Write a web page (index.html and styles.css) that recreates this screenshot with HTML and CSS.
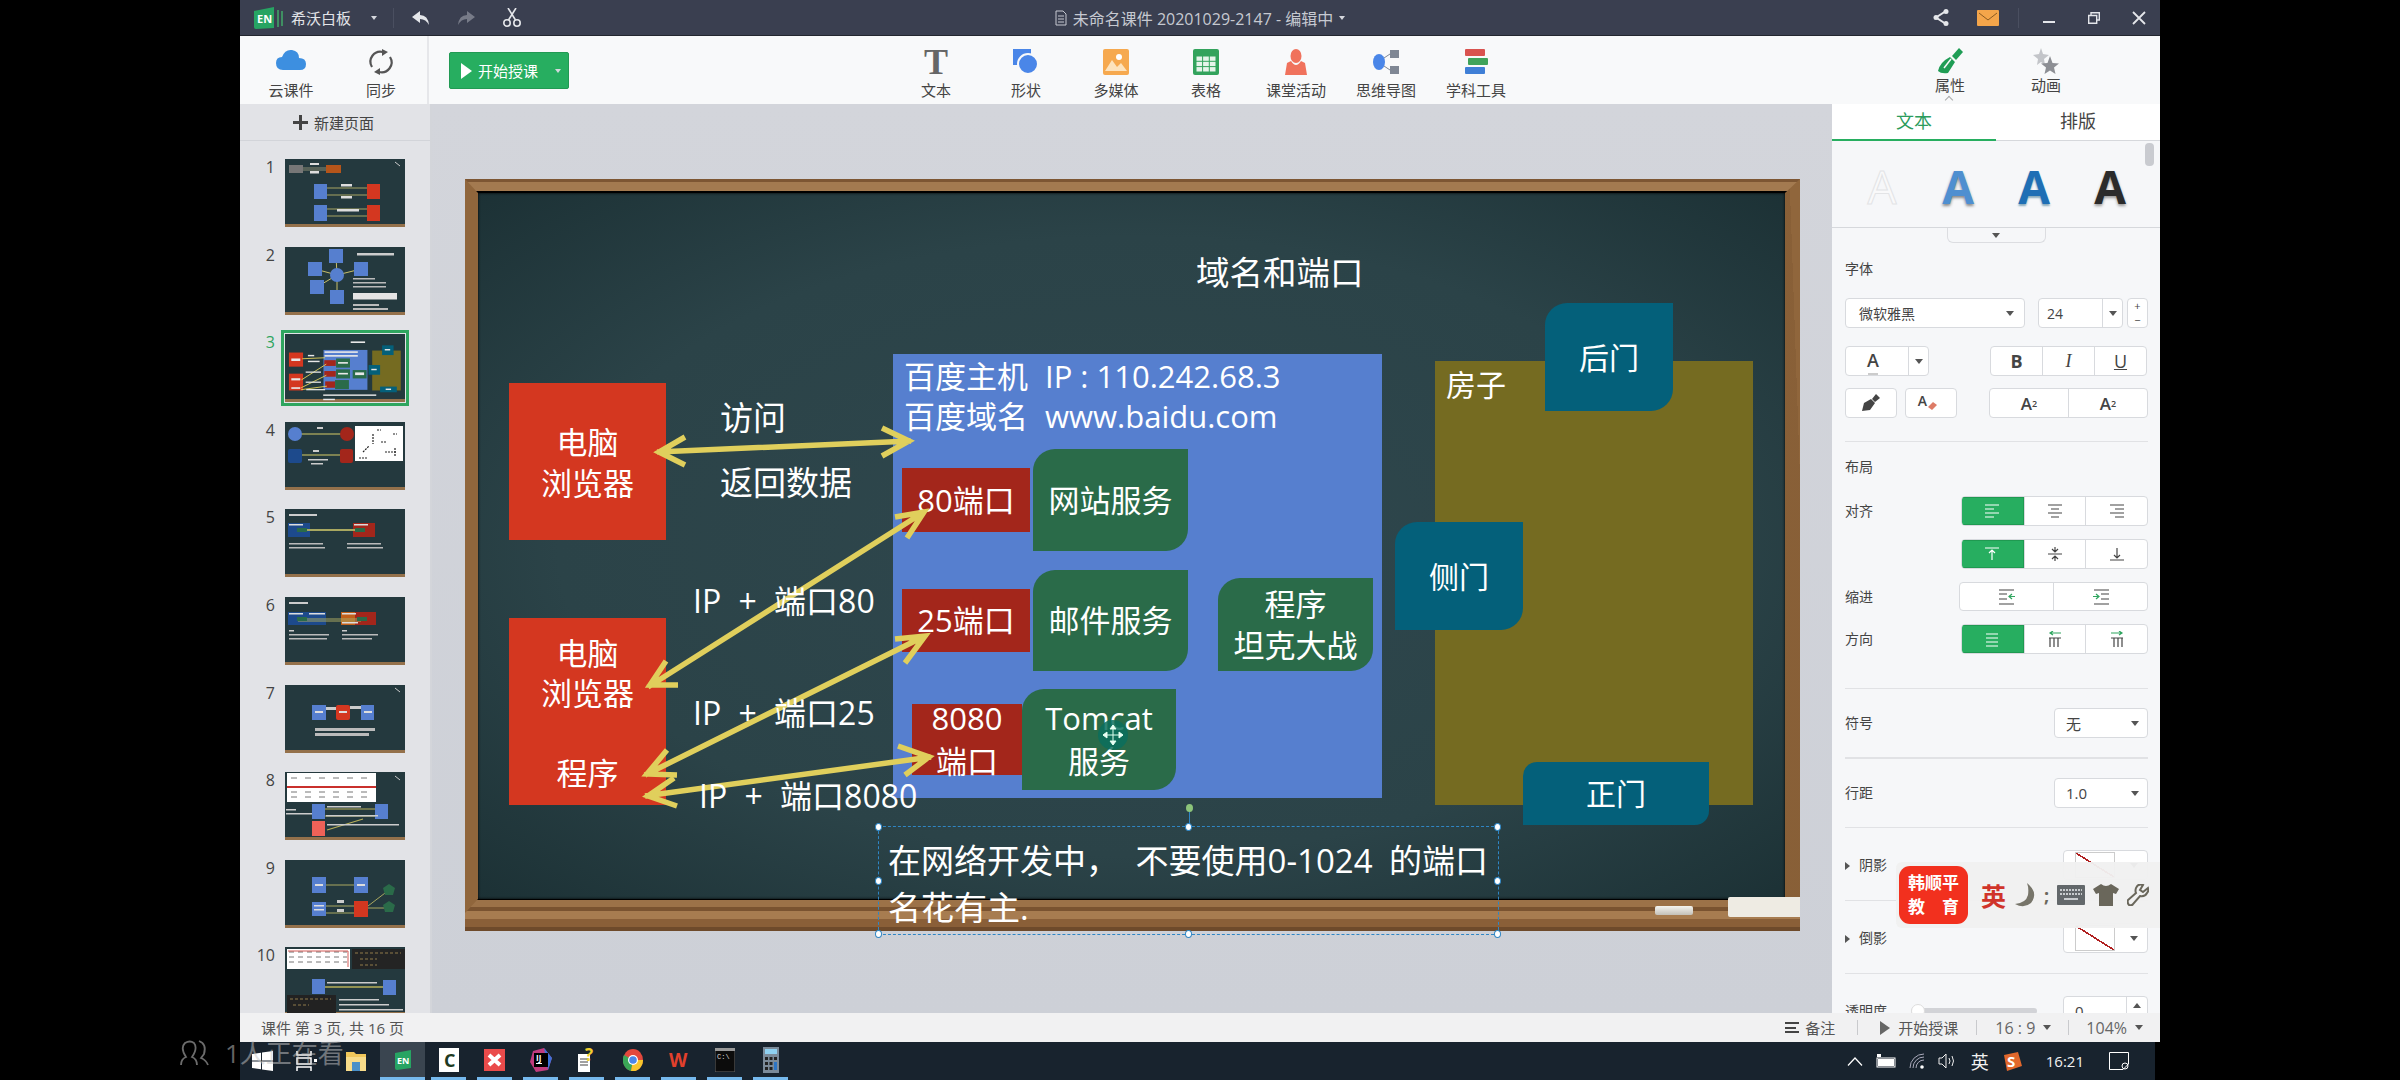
FILE: index.html
```html
<!DOCTYPE html>
<html lang="zh-CN">
  <head>
    <meta charset="UTF-8" />
    <title>希沃白板</title>
    <link rel="stylesheet" href="styles.css">
  </head>
  <body>
    <div class="app">
      <!-- title bar -->
      <header class="titlebar">
        <div class="title-left">
          <svg class="logo" width="31" height="22" viewBox="0 0 31 22"><rect x="24" y="3" width="2" height="17" fill="#3f8f62"/><rect x="28" y="4" width="2" height="15" fill="#3f8f62"/><path d="M1 4 L21 0 V21 L3 22 Q1 22 1 20Z" fill="#27a463"/><text x="4" y="16" class="logo-text">EN</text></svg>
          <span class="app-name">希沃白板</span>
          <span class="caret caret-light app-caret"></span>
          <span class="title-sep"></span>
          <svg class="undo" width="18" height="16" viewBox="0 0 18 16"><path d="M8 1 L0 7 L8 13 V9 Q14 9 17 15 Q16 5 8 5Z" fill="#e4e6ea"/></svg>
          <svg class="redo" width="18" height="16" viewBox="0 0 18 16"><path d="M10 1 L18 7 L10 13 V9 Q4 9 1 15 Q2 5 10 5Z" fill="#777b88"/></svg>
          <svg class="scissors" width="20" height="19" viewBox="0 0 20 19"><g fill="none" stroke="#e4e6ea" stroke-width="1.6"><circle cx="5" cy="15" r="3.2"/><circle cx="15" cy="15" r="3.2"/><path d="M6.5 12 L14 0M13.5 12 L6 0"/></g></svg>
        </div>
        <div class="doc-title">
          <svg width="12" height="16" viewBox="0 0 12 16"><path d="M1 1 H8 L11 4 V15 H1Z M3 6 H9 M3 9 H9 M3 12 H9" fill="none" stroke="#c6c9d1"/></svg>
          <span>未命名课件 20201029-2147 - 编辑中</span>
          <span class="caret caret-light"></span>
        </div>
        <div class="title-right">
          <svg width="16" height="17" viewBox="0 0 16 17"><path d="M13 2 L3 8.500 L13 15" fill="none" stroke="#e4e6ea" stroke-width="2"/><circle cx="13" cy="2.500" r="2.500" fill="#e4e6ea"/><circle cx="3" cy="8.500" r="2.500" fill="#e4e6ea"/><circle cx="13" cy="14.500" r="2.500" fill="#e4e6ea"/></svg>
          <svg class="mail" width="22" height="16" viewBox="0 0 22 16"><rect width="22" height="16" rx="1" fill="#f4a54a"/><path d="M2 3 L11 10 L20 3" fill="none" stroke="#8a5a20"/></svg>
          <span class="title-sep sep-right"></span>
          <span class="win-min"></span>
          <svg class="win-restore" width="12" height="12" viewBox="0 0 12 12"><path d="M3 3 V0.700 H11.300 V8 H9 M0.700 3.500 H8.700 V11.300 H0.700Z" fill="none" stroke="#e4e6ea" stroke-width="1.400"/></svg>
          <svg class="win-close" width="14" height="14" viewBox="0 0 14 14"><path d="M1 1 L13 13 M13 1 L1 13" stroke="#e4e6ea" stroke-width="1.800"/></svg>
        </div>
      </header>

      <!-- toolbar -->
      <nav class="toolbar">
        <div class="tool">
          <svg width="30" height="26" viewBox="0 0 30 26"><path d="M7 21 Q0 21 0 14 Q0 8 6 8 Q9 0 16 1 Q23 2 23 9 Q30 9 30 15 Q30 21 24 21Z" fill="#3d8fe0"/></svg>
          <span>云课件</span>
        </div>
        <div class="tool">
          <svg width="30" height="26" viewBox="0 0 30 26"><g fill="none" stroke="#555" stroke-width="2.200"><path d="M6 18 A10 10 0 0 1 17 3"/><path d="M24 8 A10 10 0 0 1 13 23"/></g><path d="M16 0 L22 3 L16 7Z M14 19 L8 23 L14 26Z" fill="#555"/></svg>
          <span>同步</span>
        </div>
        <span class="tool-sep"></span>
        <button class="start-btn"><span class="play"></span>开始授课<span class="caret caret-light"></span></button>
        <div class="tools-center">
          <div class="tool"><span class="tool-t">T</span><span>文本</span></div>
          <div class="tool">
            <svg width="26" height="26" viewBox="0 0 26 26"><rect x="0" y="0" width="18" height="16" fill="#4a86e8"/><circle cx="15" cy="15" r="10" fill="#4a86e8" stroke="#f8f9fa" stroke-width="2"/></svg>
            <span>形状</span>
          </div>
          <div class="tool">
            <svg width="26" height="26" viewBox="0 0 26 26"><rect width="26" height="26" rx="2" fill="#f6a94f"/><circle cx="16" cy="8" r="3" fill="#fff"/><path d="M2 22 L9 11 L14 18 L18 14 L24 22Z" fill="#fde3bd"/></svg>
            <span>多媒体</span>
          </div>
          <div class="tool">
            <svg width="26" height="26" viewBox="0 0 26 26"><rect width="26" height="26" rx="2" fill="#33a35c"/><path d="M3 7 H23 V23 H3Z M3 12.300 H23 M3 17.600 H23 M9.600 7 V23 M16.300 7 V23" fill="#e6f4ea" stroke="#33a35c"/></svg>
            <span>表格</span>
          </div>
          <div class="tool">
            <svg width="26" height="26" viewBox="0 0 26 26"><ellipse cx="13" cy="7" rx="5.500" ry="7" fill="#f0725c"/><path d="M2 26 L4 14 L8 12 Q13 20 18 12 L22 14 L24 26Z" fill="#f0725c"/></svg>
            <span>课堂活动</span>
          </div>
          <div class="tool">
            <svg width="30" height="26" viewBox="0 0 30 26"><ellipse cx="8" cy="13" rx="6" ry="8" fill="#4a86e8"/><rect x="19" y="1" width="9" height="8" fill="#7f8794"/><rect x="19" y="17" width="9" height="8" fill="#7f8794"/><path d="M13 9 L19 5 M13 17 L19 21" stroke="#7f8794"/></svg>
            <span>思维导图</span>
          </div>
          <div class="tool">
            <svg width="28" height="26" viewBox="0 0 28 26"><rect x="3" y="0" width="20" height="7" rx="1" fill="#d9534f"/><rect x="6" y="9" width="20" height="7" rx="1" fill="#3fa35a"/><rect x="3" y="18" width="20" height="7" rx="1" fill="#3f7fd6"/></svg>
            <span>学科工具</span>
          </div>
        </div>
        <div class="tools-right">
          <div class="tool tool-small">
            <svg width="26" height="26" viewBox="0 0 26 26"><path d="M22 0 L26 4 L19 12 L15 8Z M13 9 L18 14 L11 25 Q4 26 1 23 Q3 14 13 9Z" fill="#1f9d55"/><path d="M7 20 L14 11" stroke="#f8f9fa" stroke-width="1.500"/></svg>
            <span>属性</span>
            <span class="tool-chevron"></span>
          </div>
          <div class="tool tool-small">
            <svg width="28" height="26" viewBox="0 0 28 26"><path d="M9 0 L11 6 L17 7 L12 11 L13 17 L9 14 L5 17 L6 11 L1 7 L7 6Z" fill="#c3c5c9"/><path d="M18 8 L20.500 15 L27 15.500 L22 19.500 L23.500 26 L18 22.500 L12.500 26 L14 19.500 L9 15.500 L15.500 15Z" fill="#8d8f94"/></svg>
            <span>动画</span>
          </div>
        </div>
      </nav>

      <div class="workspace">
        <!-- page list -->
        <aside class="pages">
          <div class="new-page"><span class="plus"></span>新建页面</div>
          <div class="page-list">
            <div class="page-row"><span class="page-num">1</span><div class="thumb">
              <svg viewBox="0 0 120 68"><rect x="4" y="6" width="14" height="8" fill="#777"/><rect x="41" y="6" width="15" height="8" fill="#b5551a"/><path d="M18 9 H41 M18 11 H41" stroke="#b8b08a" stroke-width=".7"/><rect x="25" y="4" width="9" height="2" fill="#ddd"/><rect x="25" y="12" width="9" height="2.500" fill="#ddd"/><rect x="29" y="25" width="13" height="15" fill="#567fcf"/><rect x="82" y="25" width="13" height="15" fill="#d43720"/><rect x="29" y="46" width="13" height="16" fill="#567fcf"/><rect x="82" y="46" width="13" height="16" fill="#d43720"/><path d="M42 29 H82 M42 36 H82 M42 50 H82 M42 57 H82" stroke="#c9bf6c" stroke-width=".8"/><rect x="56" y="25" width="11" height="2.500" fill="#ddd"/><rect x="56" y="37" width="11" height="2.500" fill="#ddd"/><rect x="52" y="50" width="22" height="2.500" fill="#ddd"/><path d="M110 3 L115 7" stroke="#ccc"/></svg></div></div>
            <div class="page-row"><span class="page-num">2</span><div class="thumb">
              <svg viewBox="0 0 120 68"><path d="M52 28 L51 9 M52 28 L30 22 M52 28 L76 22 M52 28 L32 40 M52 28 L52 50" stroke="#c9bf6c"/><rect x="44" y="2" width="14" height="14" fill="#567fcf"/><rect x="23" y="15" width="14" height="14" fill="#567fcf"/><circle cx="52" cy="28" r="7" fill="#567fcf"/><rect x="69" y="15" width="14" height="14" fill="#567fcf"/><rect x="25" y="33" width="14" height="14" fill="#567fcf"/><rect x="45" y="43" width="14" height="14" fill="#567fcf"/><rect x="72" y="6" width="37" height="2.500" fill="#ccc"/><rect x="68" y="31" width="22" height="1.500" fill="#bbb"/><rect x="68" y="35" width="33" height="1.500" fill="#bbb"/><rect x="68" y="39" width="33" height="1.500" fill="#bbb"/><rect x="68" y="46" width="44" height="6.500" fill="#e4e4e4"/><rect x="68" y="57" width="26" height="2" fill="#bbb"/><rect x="68" y="61" width="35" height="2" fill="#bbb"/></svg></div></div>
            <div class="page-row page-active"><span class="page-num">3</span><div class="thumb">
              <svg viewBox="0 0 1335 752"><rect x="428" y="175" width="489" height="444" fill="#567fcf"/><rect x="44" y="204" width="157" height="157" fill="#d43720"/><rect x="44" y="439" width="157" height="187" fill="#d43720"/><rect x="437" y="289" width="128" height="64" fill="#a3261b"/><rect x="437" y="410" width="128" height="63" fill="#a3261b"/><rect x="447" y="525" width="110" height="71" fill="#a3261b"/><rect x="568" y="270" width="155" height="102" fill="#2a6b49"/><rect x="568" y="391" width="155" height="101" fill="#2a6b49"/><rect x="557" y="510" width="154" height="101" fill="#2a6b49"/><rect x="753" y="399" width="155" height="93" fill="#2a6b49"/><rect x="970" y="182" width="318" height="444" fill="#756b21"/><rect x="1080" y="124" width="128" height="108" fill="#04607a"/><rect x="930" y="343" width="128" height="108" fill="#04607a"/><rect x="1058" y="583" width="186" height="63" fill="#04607a"/><path d="M192 273 L446 262 M183 508 L459 333 M180 596 L460 457 M180 617 L466 578" stroke="#e3d15a" stroke-width="10"/><g fill="#e8e8e8"><rect x="731" y="80" width="160" height="18"/><rect x="440" y="190" width="370" height="18"/><rect x="440" y="232" width="370" height="18"/><rect x="70" y="270" width="100" height="28"/><rect x="70" y="490" width="100" height="24"/><rect x="70" y="590" width="100" height="18"/><rect x="255" y="230" width="70" height="16"/><rect x="255" y="295" width="130" height="16"/><rect x="230" y="415" width="170" height="14"/><rect x="230" y="527" width="170" height="14"/><rect x="236" y="610" width="210" height="14"/><rect x="590" y="310" width="110" height="18"/><rect x="590" y="430" width="110" height="18"/><rect x="780" y="425" width="100" height="30"/><rect x="425" y="670" width="590" height="16"/><rect x="425" y="718" width="130" height="16"/><rect x="1110" y="165" width="60" height="16"/><rect x="960" y="385" width="60" height="16"/><rect x="1120" y="605" width="60" height="16"/></g></svg></div></div>
            <div class="page-row"><span class="page-num">4</span><div class="thumb">
              <svg viewBox="0 0 120 68"><path d="M10 12 H62 M17 33 H55" stroke="#9a9a5a" stroke-width="1.500"/><circle cx="10" cy="12" r="7" fill="#567fcf"/><circle cx="62" cy="12" r="7" fill="#a3261b"/><rect x="3" y="27" width="14" height="14" rx="2" fill="#1d4a8c"/><rect x="55" y="27" width="13" height="14" rx="2" fill="#a3261b"/><rect x="32" y="5" width="6" height="2" fill="#ccc"/><rect x="28" y="28" width="6" height="2" fill="#ccc"/><rect x="23" y="37" width="20" height="1.500" fill="#ccc"/><rect x="26" y="41" width="12" height="1.500" fill="#ccc"/><rect x="70" y="4" width="48" height="35" fill="#fff"/><path d="M88 12 V22 M96 20 H102 M78 30 L84 24 M100 30 H112 M110 26 V35 M74 36 H82 M92 8 H96 M108 12 H112" stroke="#222" stroke-width="1.200" stroke-dasharray="2 1"/></svg></div></div>
            <div class="page-row"><span class="page-num">5</span><div class="thumb">
              <svg viewBox="0 0 120 68"><rect x="4" y="5" width="28" height="2" fill="#ccc"/><rect x="3" y="14" width="22" height="14" fill="#1d4a8c"/><rect x="68" y="14" width="22" height="14" fill="#a3261b"/><path d="M13 21 H76" stroke="#a9a860" stroke-width="2"/><rect x="12" y="19" width="10" height="4" fill="#2a6b49"/><rect x="70" y="19" width="10" height="4" fill="#2a6b49"/><rect x="4" y="15" width="14" height="1.500" fill="#ddd"/><rect x="69" y="15" width="14" height="1.500" fill="#ddd"/><rect x="4" y="34" width="34" height="1.500" fill="#bbb"/><rect x="4" y="38" width="36" height="1.500" fill="#bbb"/><rect x="62" y="34" width="34" height="1.500" fill="#bbb"/><rect x="62" y="38" width="36" height="1.500" fill="#bbb"/></svg></div></div>
            <div class="page-row"><span class="page-num">6</span><div class="thumb">
              <svg viewBox="0 0 120 68"><rect x="4" y="5" width="19" height="2" fill="#ccc"/><rect x="3" y="15" width="38" height="13" fill="#1d4a8c"/><rect x="56" y="15" width="35" height="13" fill="#a3261b"/><rect x="56" y="15" width="14" height="13" fill="#c2601a"/><path d="M13 22 H76 M13 24 H76" stroke="#a9a860" stroke-width="1"/><rect x="12" y="20" width="10" height="4" fill="#2a6b49"/><rect x="72" y="20" width="10" height="4" fill="#2a6b49"/><rect x="4" y="16" width="14" height="1.500" fill="#ddd"/><rect x="24" y="16" width="16" height="1.500" fill="#ddd"/><rect x="57" y="16" width="14" height="1.500" fill="#ddd"/><rect x="57" y="25" width="16" height="1.500" fill="#ddd"/><rect x="4" y="33" width="5" height="1.500" fill="#ccc"/><rect x="4" y="37" width="40" height="1.500" fill="#bbb"/><rect x="4" y="41" width="38" height="1.500" fill="#bbb"/><rect x="57" y="33" width="5" height="1.500" fill="#ccc"/><rect x="57" y="37" width="36" height="1.500" fill="#bbb"/><rect x="57" y="41" width="30" height="1.500" fill="#bbb"/></svg></div></div>
            <div class="page-row"><span class="page-num">7</span><div class="thumb">
              <svg viewBox="0 0 120 68"><rect x="27" y="20" width="14" height="15" fill="#567fcf"/><rect x="51" y="20" width="14" height="15" rx="2" fill="#d43720"/><rect x="76" y="20" width="13" height="15" fill="#567fcf"/><rect x="41" y="22" width="10" height="3" fill="#ccc"/><rect x="65" y="21" width="11" height="3" fill="#ccc"/><rect x="30" y="26" width="8" height="2" fill="#ddd"/><rect x="54" y="26" width="8" height="2" fill="#ddd"/><rect x="79" y="26" width="8" height="2" fill="#ddd"/><rect x="30" y="43" width="60" height="3" fill="#bbb"/><rect x="30" y="48" width="54" height="3" fill="#bbb"/><path d="M110 3 L115 7" stroke="#ccc"/></svg></div></div>
            <div class="page-row"><span class="page-num">8</span><div class="thumb">
              <svg viewBox="0 0 120 68"><rect x="2" y="1" width="89" height="29" fill="#fff"/><rect x="2" y="14" width="89" height="2" fill="#c9302c"/><path d="M6 6 H84 M6 20 H84 M6 25 H84" stroke="#777" stroke-width="1" stroke-dasharray="6 8"/><rect x="27" y="32" width="13" height="15" fill="#567fcf"/><rect x="90" y="32" width="13" height="15" fill="#567fcf"/><rect x="27" y="49" width="13" height="15" fill="#ee6258"/><path d="M40 37 H90 M40 44 H90 M42 58 L78 47" stroke="#b8b05a" stroke-width="1.200"/><rect x="42" y="34" width="34" height="1.500" fill="#ccc"/><rect x="41" y="43" width="52" height="1.500" fill="#ccc"/><rect x="42" y="52" width="72" height="1.500" fill="#ccc"/><rect x="1" y="37" width="10" height="1.500" fill="#ccc"/><rect x="1" y="41" width="26" height="1.500" fill="#ccc"/><path d="M110 4 L115 8" stroke="#ccc"/></svg></div></div>
            <div class="page-row"><span class="page-num">9</span><div class="thumb">
              <svg viewBox="0 0 120 68"><path d="M41 25 H69 M41 46 H69 M41 53 H69 M83 46 L104 30 M83 48 H104" stroke="#a9a860"/><rect x="27" y="17" width="14" height="16" fill="#567fcf"/><rect x="69" y="17" width="14" height="16" fill="#567fcf"/><rect x="27" y="42" width="14" height="14" fill="#567fcf"/><rect x="69" y="41" width="14" height="16" fill="#d43720"/><path d="M104 24 L110 28 L108 35 L100 35 L98 28Z M104 41 L110 45 L108 52 L100 52 L98 45Z" fill="#2a6b49"/><rect x="30" y="24" width="8" height="2" fill="#ddd"/><rect x="72" y="24" width="8" height="2" fill="#ddd"/><rect x="29" y="45" width="10" height="1.500" fill="#ddd"/><rect x="29" y="49" width="10" height="1.500" fill="#ddd"/><rect x="52" y="40" width="7" height="3" fill="#ccc"/><rect x="52" y="49" width="7" height="3" fill="#ccc"/></svg></div></div>
            <div class="page-row"><span class="page-num">10</span><div class="thumb">
              <svg viewBox="0 0 120 68"><rect x="2" y="2" width="63" height="20" fill="#fff"/><path d="M4 5 H62 M4 10 H62 M4 15 H62" stroke="#777" stroke-dasharray="5 4"/><path d="M3 4 H63 V20" fill="none" stroke="#c9302c" stroke-width=".8"/><rect x="67" y="2" width="53" height="20" fill="#242424"/><path d="M70 6 H116 M75 12 H92 M75 18 H92" stroke="#8f7a4a" stroke-width="1.200" stroke-dasharray="3 2"/><path d="M40 40 H98" stroke="#b8b05a" stroke-width="1.500"/><rect x="27" y="32" width="13" height="15" fill="#567fcf"/><rect x="98" y="33" width="13" height="15" fill="#567fcf"/><rect x="42" y="35" width="50" height="1.500" fill="#ccc"/><rect x="2" y="48" width="49" height="18" fill="#222"/><path d="M5 52 H46 M8 58 H24" stroke="#8f7a4a" stroke-dasharray="3 2"/><rect x="54" y="52" width="40" height="1.500" fill="#ccc"/><rect x="54" y="57" width="50" height="1.500" fill="#ccc"/><rect x="54" y="62" width="64" height="1.500" fill="#ccc"/></svg></div></div>
          </div>
        </aside>

        <!-- slide editor -->
        <main class="canvas">
          <div class="board">
            <div class="slate"></div>
            <div class="ledge"></div>
            <div class="chalk"></div>
            <div class="eraser"></div>

            <div class="node red browser-a">电脑<br>浏览器</div>
            <div class="node red browser-b">电脑<br>浏览器<br>&nbsp;<br>程序</div>
            <div class="node host">
              <span>百度主机</span><span>IP : 110.242.68.3</span>
              <span>百度域名</span><span>www.baidu.com</span>
            </div>
            <div class="node dark-red port-80">80端口</div>
            <div class="node dark-red port-25">25端口</div>
            <div class="node dark-red port-8080">8080<br>端口</div>
            <div class="node green svc-web">网站服务</div>
            <div class="node green svc-mail">邮件服务</div>
            <div class="node green svc-game">程序<br>坦克大战</div>
            <div class="node green svc-tomcat">Tomcat<br>服务</div>
            <div class="house">房子</div>
            <div class="node door door-back">后门</div>
            <div class="node door door-side">侧门</div>
            <div class="node door door-front">正门</div>

            <svg class="arrows" viewBox="0 0 1335 752">
              <g fill="none" stroke="#e0cf5c" stroke-width="5.500">
                <path d="M192 273 L446 262 M220 258 L194 273 L220 286 M417 249 L444 262 L417 277"/>
                <path d="M183 508 L459 333 M430 338 L459 333 L442 359 M201 482 L185 506 L213 506"/>
                <path d="M180 596 L460 457 M430 460 L460 457 L440 484 M202 571 L182 595 L212 596"/>
                <path d="M180 617 L466 578 M433 567 L464 578 L440 596 M209 599 L183 617 L212 627"/>
              </g>
            </svg>

            <div class="label title-label">域名和端口</div>
            <div class="label l-visit">访问</div>
            <div class="label l-return">返回数据</div>
            <div class="label l-ip l-ip80">IP + 端口80</div>
            <div class="label l-ip l-ip25">IP + 端口25</div>
            <div class="label l-ip l-ip8080">IP + 端口8080</div>

            <div class="selection">
              <p>在网络开发中， 不要使用0-1024 的端口</p>
              <p>名花有主.</p>
              <span class="rotate-line"></span>
              <span class="rotate-dot"></span>
              <span class="handle h-tl"></span><span class="handle h-tc"></span><span class="handle h-tr"></span>
              <span class="handle h-ml"></span><span class="handle h-mr"></span>
              <span class="handle h-bl"></span><span class="handle h-bc"></span><span class="handle h-br"></span>
            </div>

            <svg class="move-cursor" width="32" height="32" viewBox="0 0 32 32"><circle cx="16" cy="16" r="15" fill="#0b6e5d" opacity=".85"/><path d="M16 6 V26 M6 16 H26 M16 6 L13 10 H19Z M16 26 L13 22 H19Z M6 16 L10 13 V19Z M26 16 L22 13 V19Z" fill="#fff" stroke="#dfe" stroke-width="1"/></svg>
          </div>
        </main>

        <!-- property panel -->
        <aside class="props">
          <div class="prop-tabs"><span class="prop-tab tab-on">文本</span><span class="prop-tab">排版</span></div>
          <span class="scroll-thumb"></span>
          <div class="text-styles">
            <span class="a a-ghost">A</span><span class="a a-light">A</span><span class="a a-blue">A</span><span class="a a-dark">A</span>
          </div>
          <div class="expand"><span class="caret"></span></div>

          <div class="prop-body">
            <div class="prop-label label-font">字体</div>
            <div class="row row-font">
              <div class="box font-select"><span>微软雅黑</span><span class="caret"></span></div>
              <div class="box size-select"><span>24</span><span class="size-arrow"><span class="caret"></span></span></div>
              <div class="box spinner"><span>+</span><span>−</span></div>
            </div>
            <div class="row row-color">
              <div class="box color-pick"><span class="color-a">A</span><span class="size-arrow"><span class="caret"></span></span></div>
              <div class="seg seg-biu"><span class="b">B</span><span class="i">I</span><span class="u">U</span></div>
            </div>
            <div class="row row-extra">
              <div class="box icon-btn"><svg width="20" height="18" viewBox="0 0 20 18"><path d="M15 0 L19 4 L14 8 L11 5Z M10 5 L14 9 L9 16 L1 17 L3 9Z" fill="#444"/></svg></div>
              <div class="box icon-btn"><span class="eraser-a">A</span><svg class="eraser-i" width="11" height="9" viewBox="0 0 11 9"><path d="M1 5 L6 0 L10 3 L5 8Z" fill="#dd7b66"/></svg></div>
              <div class="seg seg-script"><span>A<sup>2</sup></span><span>A<sub>2</sub></span></div>
            </div>
            <div class="divider div-layout"></div>

            <div class="prop-label label-layout">布局</div>
            <div class="row row-align">
              <span class="prop-label">对齐</span>
              <div class="seg seg-3">
                <span class="on"><svg width="16" height="16" viewBox="0 0 16 16"><path d="M1 2 H15 M1 6 H10 M1 10 H15 M1 14 H10"/></svg></span>
                <span><svg width="16" height="16" viewBox="0 0 16 16"><path d="M1 2 H15 M4 6 H12 M1 10 H15 M4 14 H12"/></svg></span>
                <span><svg width="16" height="16" viewBox="0 0 16 16"><path d="M1 2 H15 M6 6 H15 M1 10 H15 M6 14 H15"/></svg></span>
              </div>
            </div>
            <div class="row row-valign">
              <div class="seg seg-3">
                <span class="on"><svg width="16" height="16" viewBox="0 0 16 16"><path d="M1 2 H15 M8 4 V14 M5 7 L8 4 L11 7"/></svg></span>
                <span><svg width="16" height="16" viewBox="0 0 16 16"><path d="M1 8 H15 M8 1 V6 M5 3 L8 6 L11 3 M8 15 V10 M5 13 L8 10 L11 13"/></svg></span>
                <span><svg width="16" height="16" viewBox="0 0 16 16"><path d="M1 14 H15 M8 2 V12 M5 9 L8 12 L11 9"/></svg></span>
              </div>
            </div>
            <div class="row row-indent">
              <span class="prop-label">缩进</span>
              <div class="seg seg-2">
                <span><svg width="18" height="16" viewBox="0 0 18 16"><path d="M1 1 H16 M1 5 H9 M1 10 H9 M1 15 H16"/><path class="g" d="M17 7.500 H11 M14 5 L11 7.500 L14 10"/></svg></span>
                <span><svg width="18" height="16" viewBox="0 0 18 16"><path d="M2 1 H17 M9 5 H17 M9 10 H17 M2 15 H17"/><path class="g" d="M1 7.500 H7 M4 5 L7 7.500 L4 10"/></svg></span>
              </div>
            </div>
            <div class="row row-dir">
              <span class="prop-label">方向</span>
              <div class="seg seg-3">
                <span class="on"><svg width="16" height="16" viewBox="0 0 16 16"><path d="M2 3 H14 M2 7 H14 M2 11 H14 M2 15 H14"/></svg></span>
                <span><svg width="16" height="17" viewBox="0 0 16 17"><path class="g" d="M14 2 H3 M6 0 L3 2 L6 4"/><path d="M2 7 H14 M3 7 V16 M7 7 V16 M11 7 V16"/></svg></span>
                <span><svg width="16" height="17" viewBox="0 0 16 17"><path class="g" d="M2 2 H13 M10 0 L13 2 L10 4"/><path d="M2 7 H14 M5 7 V16 M9 7 V16 M13 7 V16"/></svg></span>
              </div>
            </div>
            <div class="divider div-symbol"></div>
            <div class="row row-symbol">
              <span class="prop-label">符号</span>
              <div class="box small-select"><span>无</span><span class="caret"></span></div>
            </div>
            <div class="divider div-thick"></div>
            <div class="row row-symbol">
              <span class="prop-label">行距</span>
              <div class="box small-select"><span>1.0</span><span class="caret"></span></div>
            </div>
            <div class="divider div-symbol"></div>
            <div class="row row-effect">
              <span class="prop-label"><span class="tri"></span>阴影</span>
              <div class="box effect-select"><span class="no-fill"></span><span class="caret"></span></div>
            </div>
            <div class="divider div-effect"></div>
            <div class="row row-effect">
              <span class="prop-label"><span class="tri"></span>倒影</span>
              <div class="box effect-select"><span class="no-fill"></span><span class="caret"></span></div>
            </div>
            <div class="divider div-effect"></div>
            <div class="row row-effect">
              <span class="prop-label">透明度</span>
              <span class="slider"><span class="knob"></span></span>
              <div class="box opacity-input"><span>0</span><span class="opacity-up"></span></div>
            </div>
          </div>

          <!-- floating input method bar -->
          <div class="ime">
            <div class="ime-badge">韩顺平<br>教　育</div>
            <span class="ime-en">英</span>
            <svg width="24" height="24" viewBox="0 0 24 24"><path d="M13 0 Q25 10 17 20 Q10 26 1 21 Q12 20 14 12 Q15 5 13 0Z" fill="#77756a"/></svg>
            <span class="ime-dot">;</span>
            <svg width="28" height="20" viewBox="0 0 28 20"><rect width="28" height="20" rx="1" fill="#63686b"/><path d="M3 5 H25 M3 9 H25" stroke="#c8ccce" stroke-width="2" stroke-dasharray="2 1"/><path d="M7 14 H21" stroke="#c8ccce" stroke-width="2"/></svg>
            <svg width="26" height="22" viewBox="0 0 26 22"><path d="M8 0 Q13 4 18 0 L26 5 L23 10 L20 9 V22 H6 V9 L3 10 L0 5Z" fill="#6a675b"/></svg>
            <svg width="22" height="22" viewBox="0 0 22 22"><path d="M21 4 L16 8 L13 6 L16 1 Q11 -1 9 4 Q8 7 9 9 L1 16 Q0 19 2 21 Q5 22 6 20 L13 12 Q18 13 20 9 Q22 7 21 4Z" fill="none" stroke="#6a675b" stroke-width="2"/></svg>
          </div>
        </aside>
      </div>

      <!-- status bar -->
      <footer class="statusbar">
        <span class="page-info">课件 第 3 页, 共 16 页</span>
        <div class="status-right">
          <span class="notes-icon"></span><span>备注</span>
          <span class="status-sep sep-wide"></span>
          <span class="play play-dark"></span><span>开始授课</span>
          <span class="status-sep sep-mid"></span>
          <span class="ratio">16 : 9</span><span class="caret"></span>
          <span class="status-sep sep-tight"></span>
          <span class="ratio">104%</span><span class="caret"></span>
        </div>
      </footer>

      <!-- windows taskbar -->
      <div class="taskbar">
        <svg class="start" width="21" height="20" viewBox="0 0 21 20"><path d="M0 3 L9 1.700 V9.500 H0Z M10 1.500 L21 0 V9.500 H10Z M0 10.500 H9 V18.300 L0 17Z M10 10.500 H21 V20 L10 18.500Z" fill="#fff"/></svg>
        <svg class="taskview" width="21" height="20" viewBox="0 0 21 20"><path d="M1 0 V4 H15 V0 M1 20 V16 H15 V20 M1 7 H15 V13 H1Z" fill="none" stroke="#fff" stroke-width="1.500"/><rect x="18" y="8" width="3" height="3" fill="#fff"/></svg>
        <svg class="folder" width="20" height="22" viewBox="0 0 20 22"><path d="M0 2 H8 L10 4 H20 V21 H0Z" fill="#f1c75b"/><rect y="7" width="20" height="14" fill="#f8dc8a"/><rect x="6" y="12" width="8" height="9" fill="#4a90c8"/></svg>
        <div class="task-items">
          <div class="task-item task-on"><svg width="18" height="20" viewBox="0 0 18 20"><path d="M1 3 L17 0 V18 L3 20 Q1 20 1 18Z" fill="#27a463"/><text x="3" y="14" class="en-text">EN</text></svg></div>
          <div class="task-item"><svg width="20" height="24" viewBox="0 0 20 24"><rect width="20" height="24" fill="#fff"/><text x="5" y="19" class="c-text">C</text></svg></div>
          <div class="task-item"><svg width="21" height="22" viewBox="0 0 21 22"><rect width="21" height="22" fill="#ea4b4b"/><path d="M5 6 L16 16 M16 6 L5 16" stroke="#fff" stroke-width="4"/></svg></div>
          <div class="task-item"><svg width="22" height="24" viewBox="0 0 22 24"><path d="M3 3 L14 0 L22 10 L18 22 L6 24 L0 14Z" fill="#c13c7e"/><path d="M14 0 L22 10 L18 22Z" fill="#3a72d9"/><rect x="4" y="5" width="14" height="14" fill="#000"/><text x="6" y="13" class="ij-text">IJ</text><rect x="6" y="15" width="6" height="1" fill="#fff"/></svg></div>
          <div class="task-item"><svg width="18" height="24" viewBox="0 0 18 24"><rect x="0" y="6" width="12" height="18" fill="#fff"/><path d="M2 11 H10 M2 14 H10 M2 17 H10" stroke="#444"/><text x="7" y="13" class="q-text">?</text></svg></div>
          <div class="task-item"><svg width="20" height="22" viewBox="0 0 20 22"><ellipse cx="10" cy="11" rx="10" ry="11" fill="#e2483d"/><path d="M10 11 L1 6 A10 11 0 0 0 8 22Z" fill="#3aa757"/><path d="M10 11 H20 A10 11 0 0 1 8 22Z" fill="#f7c52c"/><circle cx="10" cy="11" r="5" fill="#fff"/><circle cx="10" cy="11" r="3.800" fill="#4a86e8"/></svg></div>
          <div class="task-item"><svg width="20" height="20" viewBox="0 0 20 20"><text x="0" y="17" class="w-text">W</text></svg></div>
          <div class="task-item"><svg width="20" height="24" viewBox="0 0 20 24"><rect width="20" height="24" fill="#0c0c0c" stroke="#666"/><rect width="20" height="3" fill="#999"/><text x="2" y="11" class="cmd-text">C:\</text></svg></div>
          <div class="task-item"><svg width="16" height="26" viewBox="0 0 16 26"><rect width="16" height="26" fill="#7b8a99"/><rect x="2" y="2" width="12" height="5" fill="#8fd0f0"/><path d="M2 10 H5 V13 H2Z M6.500 10 H9.500 V13 H6.500Z M11 10 H14 V13 H11Z M2 15 H5 V18 H2Z M6.500 15 H9.500 V18 H6.500Z M2 20 H5 V23 H2Z M6.500 20 H9.500 V23 H6.500Z" fill="#222"/><rect x="11" y="15" width="3" height="8" fill="#2c74c4"/></svg></div>
        </div>
        <div class="tray">
          <svg width="16" height="9" viewBox="0 0 16 9"><path d="M1 8.500 L8 1 L15 8.500" fill="none" stroke="#fff" stroke-width="1.200"/></svg>
          <svg width="20" height="14" viewBox="0 0 20 14"><rect x="1" y="4" width="18" height="9" fill="none" stroke="#fff"/><rect x="2" y="5" width="16" height="7" fill="#fff"/><rect x="1" y="0" width="4" height="3" fill="#fff"/></svg>
          <svg width="16" height="16" viewBox="0 0 16 16"><g fill="none" stroke="#aab" stroke-width="1"><path d="M1 15 A14 14 0 0 1 15 1"/><path d="M4 15 A11 11 0 0 1 15 4"/><path d="M7 15 A8 8 0 0 1 15 7"/></g><circle cx="13" cy="14" r="1.800" fill="#fff"/></svg>
          <svg width="20" height="16" viewBox="0 0 20 16"><path d="M1 5 H4 L8 1 V15 L4 11 H1Z M11 5 Q13 8 11 11 M14 3 Q17 8 14 13" fill="none" stroke="#eee"/></svg>
          <span class="tray-lang">英</span>
          <svg width="20" height="19" viewBox="0 0 20 19"><path d="M2 3 L16 0 L20 14 L5 19 Z" fill="#e2682c"/><text x="5" y="15" class="sogou-text">S</text></svg>
          <span class="tray-time">16:21</span>
          <svg width="20" height="18" viewBox="0 0 20 18"><path d="M0.500 0.500 H19.500 V12 L14 17.500 H0.500Z" fill="none" stroke="#fff"/><circle cx="16" cy="14" r="3" fill="none" stroke="#fff"/></svg>
        </div>
      </div>
    </div>

    <!-- viewers overlay from the video -->
    <div class="watching">
      <svg width="30" height="26" viewBox="0 0 30 26"><g fill="none" stroke="#888" stroke-width="1.800"><path d="M1 25 Q1 19 6 17 Q0 8 5 3 Q10 0 14 3 Q18 8 12 17 Q17 19 17 25"/><path d="M19 1 Q27 4 24 14 L21 18 Q26 20 28 25"/></g></svg>
      <span>1人正在看</span>
    </div>
  </body>
</html>
```

FILE: styles.css
```css
* {
  box-sizing: border-box;
}
html,
body {
  margin: 0;
  width: 2400px;
  height: 1080px;
  overflow: hidden;
  background: #000;
  font-family: "Open Sans", "Noto Sans CJK SC", sans-serif;
  color: #444;
}
.app {
  width: 1920px;
  height: 1080px;
  margin-left: 240px;
  display: flex;
  flex-direction: column;
}
.caret {
  display: inline-block;
  width: 0;
  height: 0;
  border-left: 4px solid transparent;
  border-right: 4px solid transparent;
  border-top: 5px solid #555;
}
.caret-light {
  border-top-color: #d5d7dd;
  border-left-width: 3px;
  border-right-width: 3px;
  border-top-width: 4px;
}

/* title bar */
.titlebar {
  height: 36px;
  flex: none;
  background: #3a3f50;
  border-bottom: 1px solid #23262f;
  display: grid;
  grid-template-columns: 1fr auto 1fr;
  align-items: center;
  color: #d5d7dd;
  font-size: 15px;
}
.title-left,
.title-right,
.doc-title {
  display: flex;
  align-items: center;
}
.title-left {
  padding-left: 13px;
}
.logo-text {
  font: bold 11px "Open Sans", sans-serif;
  fill: #fff;
}
.app-name {
  margin-left: 7px;
  color: #e2e4e8;
}
.app-caret {
  margin-left: 20px;
}
.title-sep {
  width: 1px;
  height: 20px;
  background: #4a4f60;
  margin-left: 16px;
}
.undo {
  margin-left: 18px;
}
.redo {
  margin-left: 27px;
}
.scissors {
  margin-left: 27px;
}
.doc-title {
  gap: 6px;
  color: #c6c9d1;
  font-size: 16px;
}
.title-right {
  justify-content: flex-end;
  padding-right: 14px;
}
.mail {
  margin-left: 28px;
}
.sep-right {
  margin-left: 19px;
}
.win-min {
  width: 12px;
  height: 2px;
  margin: 8px 0 0 24px;
  background: #e4e6ea;
}
.win-restore {
  margin-left: 33px;
}
.win-close {
  margin-left: 32px;
}

/* toolbar */
.toolbar {
  height: 68px;
  flex: none;
  background: #f8f9fa;
  display: flex;
  align-items: flex-start;
  padding-left: 6px;
}
.tool {
  width: 90px;
  height: 68px;
  padding-top: 13px;
  display: flex;
  flex-direction: column;
  align-items: center;
  gap: 6px;
  font-size: 15px;
  line-height: 18px;
  color: #444;
  position: relative;
}
.tool svg {
  height: 26px;
  flex: none;
}
.tool-t {
  height: 26px;
  font: bold 36px/26px "Liberation Serif", serif;
  color: #666;
}
.tool-sep {
  width: 2px;
  height: 68px;
  background: #e6e7ea;
  margin-left: 1px;
}
.start-btn {
  width: 120px;
  height: 37px;
  margin: 16px 0 0 20px;
  border: 1px solid #219a53;
  border-radius: 2px;
  background: #27ae60;
  color: #fff;
  font: 15px "Open Sans", "Noto Sans CJK SC", sans-serif;
  display: flex;
  align-items: center;
  padding: 0 0 0 11px;
}
.play {
  width: 0;
  height: 0;
  border-left: 11px solid #fff;
  border-top: 8px solid transparent;
  border-bottom: 8px solid transparent;
  margin-right: 6px;
}
.start-btn .caret {
  margin-left: 17px;
}
.tools-center {
  display: flex;
  margin-left: 322px;
}
.tools-right {
  display: flex;
  margin-left: auto;
  padding-right: 66px;
}
.tools-right .tool {
  width: 96px;
}
.tool-small {
  padding-top: 12px;
  gap: 2px;
}
.tool-chevron {
  position: absolute;
  left: 44px;
  top: 61px;
  width: 6px;
  height: 6px;
  border-left: 1px solid #aaa;
  border-top: 1px solid #aaa;
  transform: rotate(45deg);
}

/* workspace */
.workspace {
  flex: 1;
  min-height: 0;
  display: flex;
}
.pages {
  width: 192px;
  flex: none;
  background: #e2e3e7;
  border-right: 2px solid #d3d5da;
  display: flex;
  flex-direction: column;
  overflow: hidden;
}
.new-page {
  height: 37px;
  flex: none;
  border-bottom: 1px solid #d2d4d9;
  display: flex;
  align-items: center;
  padding-left: 53px;
  gap: 6px;
  font-size: 15px;
  color: #444;
}
.plus {
  width: 15px;
  height: 15px;
  background:
    linear-gradient(#444, #444) center / 15px 3px no-repeat,
    linear-gradient(#444, #444) center / 3px 15px no-repeat;
}
.page-list {
  padding-top: 18px;
  display: flex;
  flex-direction: column;
  gap: 19.6px;
}
.page-row {
  display: flex;
  gap: 10px;
  flex: none;
}
.page-num {
  width: 35px;
  text-align: right;
  font-size: 16px;
  line-height: 16px;
  color: #444;
}
.thumb {
  width: 120px;
  height: 68px;
  background: linear-gradient(transparent 65px, #94714b 65px), #24393e;
}
.thumb svg {
  display: block;
  width: 120px;
  height: 68px;
  filter: blur(0.4px);
}
.page-active .page-num {
  color: #2fa55f;
}
.page-active .thumb {
  outline: 3px solid #2fa55f;
  outline-offset: 1px;
}

/* slide canvas */
.canvas {
  flex: 1;
  background: linear-gradient(#d3d5db, #cdd0d7);
  padding: 75px 0 0 33px;
  overflow: hidden;
}
.board {
  width: 1335px;
  height: 752px;
  position: relative;
  background:
    repeating-linear-gradient(88deg, transparent 0 40px, rgba(70, 40, 15, 0.1) 40px 90px),
    #90663c;
  color: #fff;
  font-size: 31px;
  line-height: 41px;
}
.board::before {
  content: "";
  position: absolute;
  left: 0;
  right: 0;
  top: 0;
  height: 14px;
  background: linear-gradient(#7d5633 0 3px, #a37a50 3px 12px, #000 12px);
  clip-path: polygon(0 0, 100% 0, calc(100% - 15px) 100%, 13px 100%);
}
.ledge {
  position: absolute;
  left: 0;
  right: 0;
  bottom: 0;
  height: 32px;
  background:
    linear-gradient(#000 0 1px, #9c7248 1px 8px, #7a5330 8px 12px, #a77c50 12px 20px, #8a5f38 20px 28px, #6e4a2b 28px);
  clip-path: polygon(13px 0, calc(100% - 15px) 0, 100% 14px, 100% 100%, 0 100%, 0 14px);
}
.slate {
  position: absolute;
  left: 13px;
  top: 14px;
  right: 15px;
  bottom: 32px;
  background: radial-gradient(ellipse at center, #2f474d 0%, #2b4348 62%, #1c3135 100%);
  box-shadow: inset 0 0 3px #000;
}
.chalk {
  position: absolute;
  z-index: 1;
  left: 1190px;
  top: 727px;
  width: 38px;
  height: 9px;
  border-radius: 2px;
  background: linear-gradient(#f4f4f0, #c3c0b8);
}
.eraser {
  position: absolute;
  z-index: 1;
  left: 1263px;
  top: 718px;
  width: 72px;
  height: 20px;
  border-radius: 2px 0 0 2px;
  background: #eeebe3;
}
.node,
.house,
.label {
  position: absolute;
}
.node {
  z-index: 1;
  display: flex;
  align-items: center;
  justify-content: center;
  text-align: center;
}
.red {
  background: #d43720;
}
.dark-red {
  background: #a3261b;
}
.green {
  background: #2a6b49;
  border-radius: 22px 0 22px 0;
}
.browser-a {
  left: 44px;
  top: 204px;
  width: 157px;
  height: 157px;
  padding-top: 2px;
}
.browser-b {
  left: 44px;
  top: 439px;
  width: 157px;
  height: 187px;
  line-height: 40px;
  padding-top: 2px;
}
.node.host {
  left: 428px;
  top: 175px;
  width: 489px;
  height: 444px;
  background: #567fcf;
  padding: 2px 0 0 11px;
  display: grid;
  grid-template-columns: 141px 1fr;
  grid-auto-rows: 40px;
  justify-content: start;
  align-content: start;
  text-align: left;
  white-space: nowrap;
}
.port-80 {
  left: 437px;
  top: 289px;
  width: 128px;
  height: 64px;
}
.port-25 {
  left: 437px;
  top: 410px;
  width: 128px;
  height: 63px;
}
.port-8080 {
  left: 447px;
  top: 525px;
  width: 110px;
  height: 71px;
  line-height: 43px;
  padding-top: 1px;
}
.svc-web {
  left: 568px;
  top: 270px;
  width: 155px;
  height: 102px;
}
.svc-mail {
  left: 568px;
  top: 391px;
  width: 155px;
  height: 101px;
}
.svc-game {
  left: 753px;
  top: 399px;
  width: 155px;
  height: 93px;
}
.svc-tomcat {
  left: 557px;
  top: 510px;
  width: 154px;
  height: 101px;
  line-height: 43px;
}
.house {
  z-index: 1;
  left: 970px;
  top: 182px;
  width: 318px;
  height: 444px;
  background: #756b21;
  padding: 3px 0 0 11px;
  font-size: 30px;
}
.door {
  background: #04607a;
  border-radius: 22px 0 22px 0;
  font-size: 30px;
}
.door-back {
  left: 1080px;
  top: 124px;
  width: 128px;
  height: 108px;
}
.door-side {
  left: 930px;
  top: 343px;
  width: 128px;
  height: 108px;
}
.door-front {
  left: 1058px;
  top: 583px;
  width: 186px;
  height: 63px;
  border-radius: 14px 0 14px 0;
}
.arrows {
  position: absolute;
  z-index: 2;
  left: 0;
  top: 0;
  width: 1335px;
  height: 752px;
}
.label {
  z-index: 3;
  line-height: 40px;
  white-space: nowrap;
  font-size: 33px;
}
.title-label {
  left: 731px;
  top: 73px;
  font-size: 33.5px;
}
.l-visit {
  left: 255px;
  top: 219px;
}
.l-return {
  left: 255px;
  top: 284px;
}
.l-ip {
  font-size: 32px;
  word-spacing: 9px;
}
.l-ip80 {
  left: 228px;
  top: 402px;
}
.l-ip25 {
  left: 228px;
  top: 514px;
}
.l-ip8080 {
  left: 234px;
  top: 597px;
}
.selection {
  position: absolute;
  z-index: 3;
  left: 413px;
  top: 647px;
  width: 621px;
  height: 109px;
  border: 1px dashed #2f86c5;
  padding: 10px 0 0 9px;
  font-size: 33px;
  line-height: 47px;
  word-spacing: 8px;
  white-space: nowrap;
}
.selection p {
  margin: 0;
}
.handle {
  position: absolute;
  width: 7px;
  height: 8px;
  border-radius: 50%;
  background: #fff;
  border: 1.5px solid #2f86c5;
  margin: -4px 0 0 -4px;
}
.h-tl {
  left: 0;
  top: 0;
}
.h-tc {
  left: 50%;
  top: 0;
}
.h-tr {
  left: 100%;
  top: 0;
}
.h-ml {
  left: 0;
  top: 50%;
}
.h-mr {
  left: 100%;
  top: 50%;
}
.h-bl {
  left: 0;
  top: 100%;
}
.h-bc {
  left: 50%;
  top: 100%;
}
.h-br {
  left: 100%;
  top: 100%;
}
.rotate-line {
  position: absolute;
  left: 50%;
  top: -19px;
  width: 1px;
  height: 19px;
  background: #2f86c5;
}
.rotate-dot {
  position: absolute;
  left: 50%;
  top: -23px;
  width: 7px;
  height: 8px;
  margin-left: -3px;
  border-radius: 50%;
  background: #8cc47a;
}
.move-cursor {
  position: absolute;
  z-index: 4;
  left: 632px;
  top: 540px;
}

/* property panel */
.props {
  width: 328px;
  flex: none;
  position: relative;
  background: #f6f7f9;
  overflow: hidden;
  font-size: 14px;
}
.prop-tabs {
  height: 37px;
  background: #fff;
  display: flex;
  border-bottom: 1px solid #d6d8dc;
}
.prop-tab {
  width: 165px;
  text-align: center;
  font-size: 18px;
  line-height: 34px;
  color: #444;
}
.tab-on {
  color: #2b9c5c;
  border-bottom: 2px solid #27ae60;
  height: 37px;
}
.scroll-thumb {
  position: absolute;
  right: 6px;
  top: 39px;
  width: 9px;
  height: 23px;
  border-radius: 4px;
  background: #c9cbd0;
}
.text-styles {
  height: 87px;
  border-bottom: 1px solid #d6d8dc;
  position: relative;
  display: flex;
  padding: 4px 0 0 34px;
  gap: 44px;
  align-items: center;
}
.a {
  width: 32px;
  text-align: center;
  font-weight: 700;
  font-size: 46px;
  line-height: 50px;
}
.a-ghost {
  color: #f9f9fa;
  -webkit-text-stroke: 1px #e3e4e6;
  font-weight: 400;
}
.a-light {
  color: #4f8fd0;
  text-shadow: 0 2px 3px #888;
}
.a-blue {
  color: #1f6fb5;
  text-shadow: 0 2px 2px #8ab;
}
.a-dark {
  color: #2b2b2b;
  text-shadow: 0 2px 3px #999;
}
.expand {
  width: 99px;
  height: 15px;
  margin: 0 auto;
  border: 1px solid #dcdde1;
  border-top: 0;
  border-radius: 0 0 6px 6px;
  display: flex;
  justify-content: center;
  align-items: center;
}
.prop-body {
  padding: 16px 12px 0 13px;
}
.prop-label {
  font-size: 14px;
  line-height: 20px;
  color: #444;
  white-space: nowrap;
}
.row {
  display: flex;
  align-items: center;
  justify-content: space-between;
}
.box {
  height: 30px;
  background: #fff;
  border: 1px solid #d8dade;
  border-radius: 4px;
  display: flex;
  align-items: center;
  position: relative;
  color: #444;
}
.row-font {
  margin-top: 19px;
}
.font-select {
  width: 180px;
  padding: 0 10px 0 13px;
  justify-content: space-between;
}
.size-select {
  width: 85px;
  padding-left: 8px;
  justify-content: space-between;
  margin-left: 13px;
}
.size-arrow {
  width: 20px;
  height: 28px;
  border-left: 1px solid #d8dade;
  display: flex;
  align-items: center;
  justify-content: center;
}
.spinner {
  width: 21px;
  margin-left: 4px;
  flex-direction: column;
  font-size: 11px;
  line-height: 14px;
}
.row-color {
  margin-top: 18px;
}
.color-pick {
  width: 84px;
  justify-content: space-between;
  padding-left: 21px;
}
.color-a {
  font-size: 18px;
  font-weight: 600;
  line-height: 20px;
  border-bottom: 3px solid #fff;
  box-shadow: 0 3px 0 -1px #ccc;
}
.seg {
  height: 30px;
  display: flex;
  background: #fff;
  border: 1px solid #d8dade;
  border-radius: 4px;
  overflow: hidden;
}
.seg > span {
  flex: 1;
  display: flex;
  align-items: center;
  justify-content: center;
  border-left: 1px solid #d8dade;
}
.seg > span:first-child {
  border-left: 0;
}
.seg-biu {
  width: 157px;
  margin-right: 1px;
  font-size: 18px;
  color: #444;
}
.b {
  font-weight: 700;
}
.i {
  font-family: "Liberation Serif", serif;
  font-style: italic;
}
.u {
  text-decoration: underline;
}
.row-extra {
  margin-top: 12px;
  justify-content: flex-start;
}
.icon-btn {
  width: 52px;
  margin-right: 8px;
  justify-content: center;
}
.eraser-a {
  font-size: 14px;
  font-weight: 600;
  margin: -6px 0 0 -6px;
}
.eraser-i {
  margin-top: 6px;
}
.seg-script {
  width: 159px;
  margin-left: 24px;
  font-size: 17px;
  font-weight: 600;
}
.seg-script sup,
.seg-script sub {
  font-size: 9px;
}
.divider {
  height: 1px;
  background: #e1e2e5;
}
.div-layout {
  margin-top: 23px;
}
.label-layout {
  margin-top: 15px;
}
.seg-3 {
  width: 187px;
  margin-left: auto;
}
.seg-3 svg,
.seg-2 svg {
  fill: none;
  stroke: #444;
  stroke-width: 1.2;
}
.seg svg .g {
  stroke: #2fa55f;
}
.seg .on {
  background: #27ae60;
  border: 1px solid #1f9a51;
}
.seg .on svg {
  stroke: #fff;
}
.row-align {
  margin-top: 19px;
}
.row-valign,
.row-indent,
.row-dir {
  margin-top: 13px;
}
.seg-2 {
  width: 189px;
  height: 29px;
}
.div-symbol {
  margin-top: 19px;
}
.row-dir + .div-symbol {
  margin-top: 34px;
}
.row-symbol {
  margin-top: 19px;
}
.div-thick {
  height: 2px;
  margin-top: 19px;
}
.small-select {
  width: 94px;
  padding: 0 8px 0 11px;
  justify-content: space-between;
  font-size: 15px;
}
.row-effect {
  margin-top: 22px;
}
.div-effect {
  margin-top: 20px;
}
.tri {
  display: inline-block;
  width: 0;
  height: 0;
  margin-right: 9px;
  border-left: 5px solid #555;
  border-top: 4px solid transparent;
  border-bottom: 4px solid transparent;
}
.effect-select {
  width: 85px;
  padding: 0 9px 0 11px;
  justify-content: space-between;
}
.no-fill {
  width: 40px;
  height: 26px;
  border: 1px solid #ccc;
  background: linear-gradient(to top right, transparent 48%, #b02020 48% 52%, transparent 52%);
}
.slider {
  width: 126px;
  height: 6px;
  margin-left: 14px;
  border-radius: 3px;
  background: #d2d3d7;
  position: relative;
}
.knob {
  position: absolute;
  left: 0;
  top: -4px;
  width: 14px;
  height: 14px;
  border-radius: 50%;
  background: #fff;
  border: 1px solid #ddd;
}
.opacity-input {
  width: 85px;
  padding-left: 11px;
  font-size: 15px;
  margin-left: 17px;
}
.opacity-up {
  position: absolute;
  right: 0;
  top: 0;
  width: 21px;
  height: 28px;
  border-left: 1px solid #d8dade;
}
.opacity-up::after {
  content: "";
  position: absolute;
  left: 6px;
  top: 6px;
  border-left: 4px solid transparent;
  border-right: 4px solid transparent;
  border-bottom: 5px solid #555;
}
.ime {
  position: absolute;
  left: 64px;
  top: 758px;
  width: 264px;
  height: 66px;
  padding-left: 3px;
  border-radius: 6px 0 0 6px;
  background: rgba(240, 240, 240, 0.96);
  display: flex;
  align-items: center;
}
.ime-badge {
  width: 69px;
  height: 58px;
  border-radius: 11px;
  background: #f2301e;
  color: #fff;
  font-size: 17px;
  font-weight: 700;
  line-height: 24px;
  text-align: center;
  padding-top: 5px;
  white-space: nowrap;
}
.ime-en {
  margin-left: 13px;
  font-size: 25px;
  font-weight: 700;
  color: #d0342a;
}
.ime > svg {
  margin-left: 8px;
}
.ime-dot {
  margin-left: 6px;
  font-size: 18px;
  font-weight: 700;
  color: #6a675b;
}

/* status bar */
.statusbar {
  height: 29px;
  flex: none;
  background: #f1f1f2;
  display: flex;
  align-items: center;
  justify-content: space-between;
  padding: 0 17px 0 21px;
  font-size: 15px;
  color: #555;
}
.status-right {
  display: flex;
  align-items: center;
}
.notes-icon {
  width: 14px;
  height: 11px;
  margin-right: 6px;
  border-top: 2px solid #444;
  border-bottom: 2px solid #444;
  background: linear-gradient(#444, #444) left center / 11px 2px no-repeat;
}
.status-sep {
  width: 1px;
  height: 15px;
  background: #c9cacd;
}
.sep-wide {
  margin: 0 22px;
}
.sep-mid {
  margin: 0 18px;
}
.sep-tight {
  margin: 0 17px;
}
.play-dark {
  border-left-color: #666;
  border-left-width: 10px;
  border-top-width: 7px;
  border-bottom-width: 7px;
  margin-right: 8px;
}
.ratio {
  font-size: 16px;
  margin-right: 8px;
  color: #666;
}

/* taskbar */
.taskbar {
  height: 38px;
  flex: none;
  background: #18232e;
  display: flex;
  align-items: center;
  padding-left: 12px;
  border-right: 5px solid #000;
}
.taskview {
  margin-left: 23px;
}
.folder {
  margin-left: 29px;
}
.task-items {
  display: flex;
  gap: 11px;
  margin-left: 14px;
  height: 38px;
}
.task-item {
  width: 35px;
  height: 38px;
  display: flex;
  align-items: center;
  justify-content: center;
  border-bottom: 3px solid #76b9ed;
}
.task-on {
  width: 45px;
  margin-right: -5px;
  background: #3a4550;
}
.en-text {
  font: bold 9px "Open Sans", sans-serif;
  fill: #fff;
}
.c-text {
  font: bold 18px "Open Sans", sans-serif;
  fill: #1d3a22;
}
.ij-text {
  font: bold 8px "Open Sans", sans-serif;
  fill: #fff;
}
.q-text {
  font: bold 17px "Open Sans", sans-serif;
  fill: #f2cf2e;
}
.w-text {
  font: bold 19px "Open Sans", sans-serif;
  fill: #e2402c;
}
.cmd-text {
  font: 7px "Liberation Mono", monospace;
  fill: #ddd;
}
.sogou-text {
  font: bold 15px "Open Sans", sans-serif;
  fill: #fff;
}
.tray {
  margin-left: auto;
  padding-right: 26px;
  display: flex;
  align-items: center;
  gap: 13px;
  color: #f2f2f2;
}
.tray-lang {
  font-size: 18px;
  margin-left: 0;
}
.tray-time {
  font-size: 15px;
  margin: 0 12px 0 11px;
}

/* overlay from the recording */
.watching {
  position: absolute;
  left: 180px;
  top: 1036px;
  display: flex;
  align-items: center;
  gap: 15px;
  font-size: 26px;
  line-height: 34px;
  color: rgba(200, 200, 200, 0.5);
}
.watching svg {
  opacity: 0.8;
}
```
